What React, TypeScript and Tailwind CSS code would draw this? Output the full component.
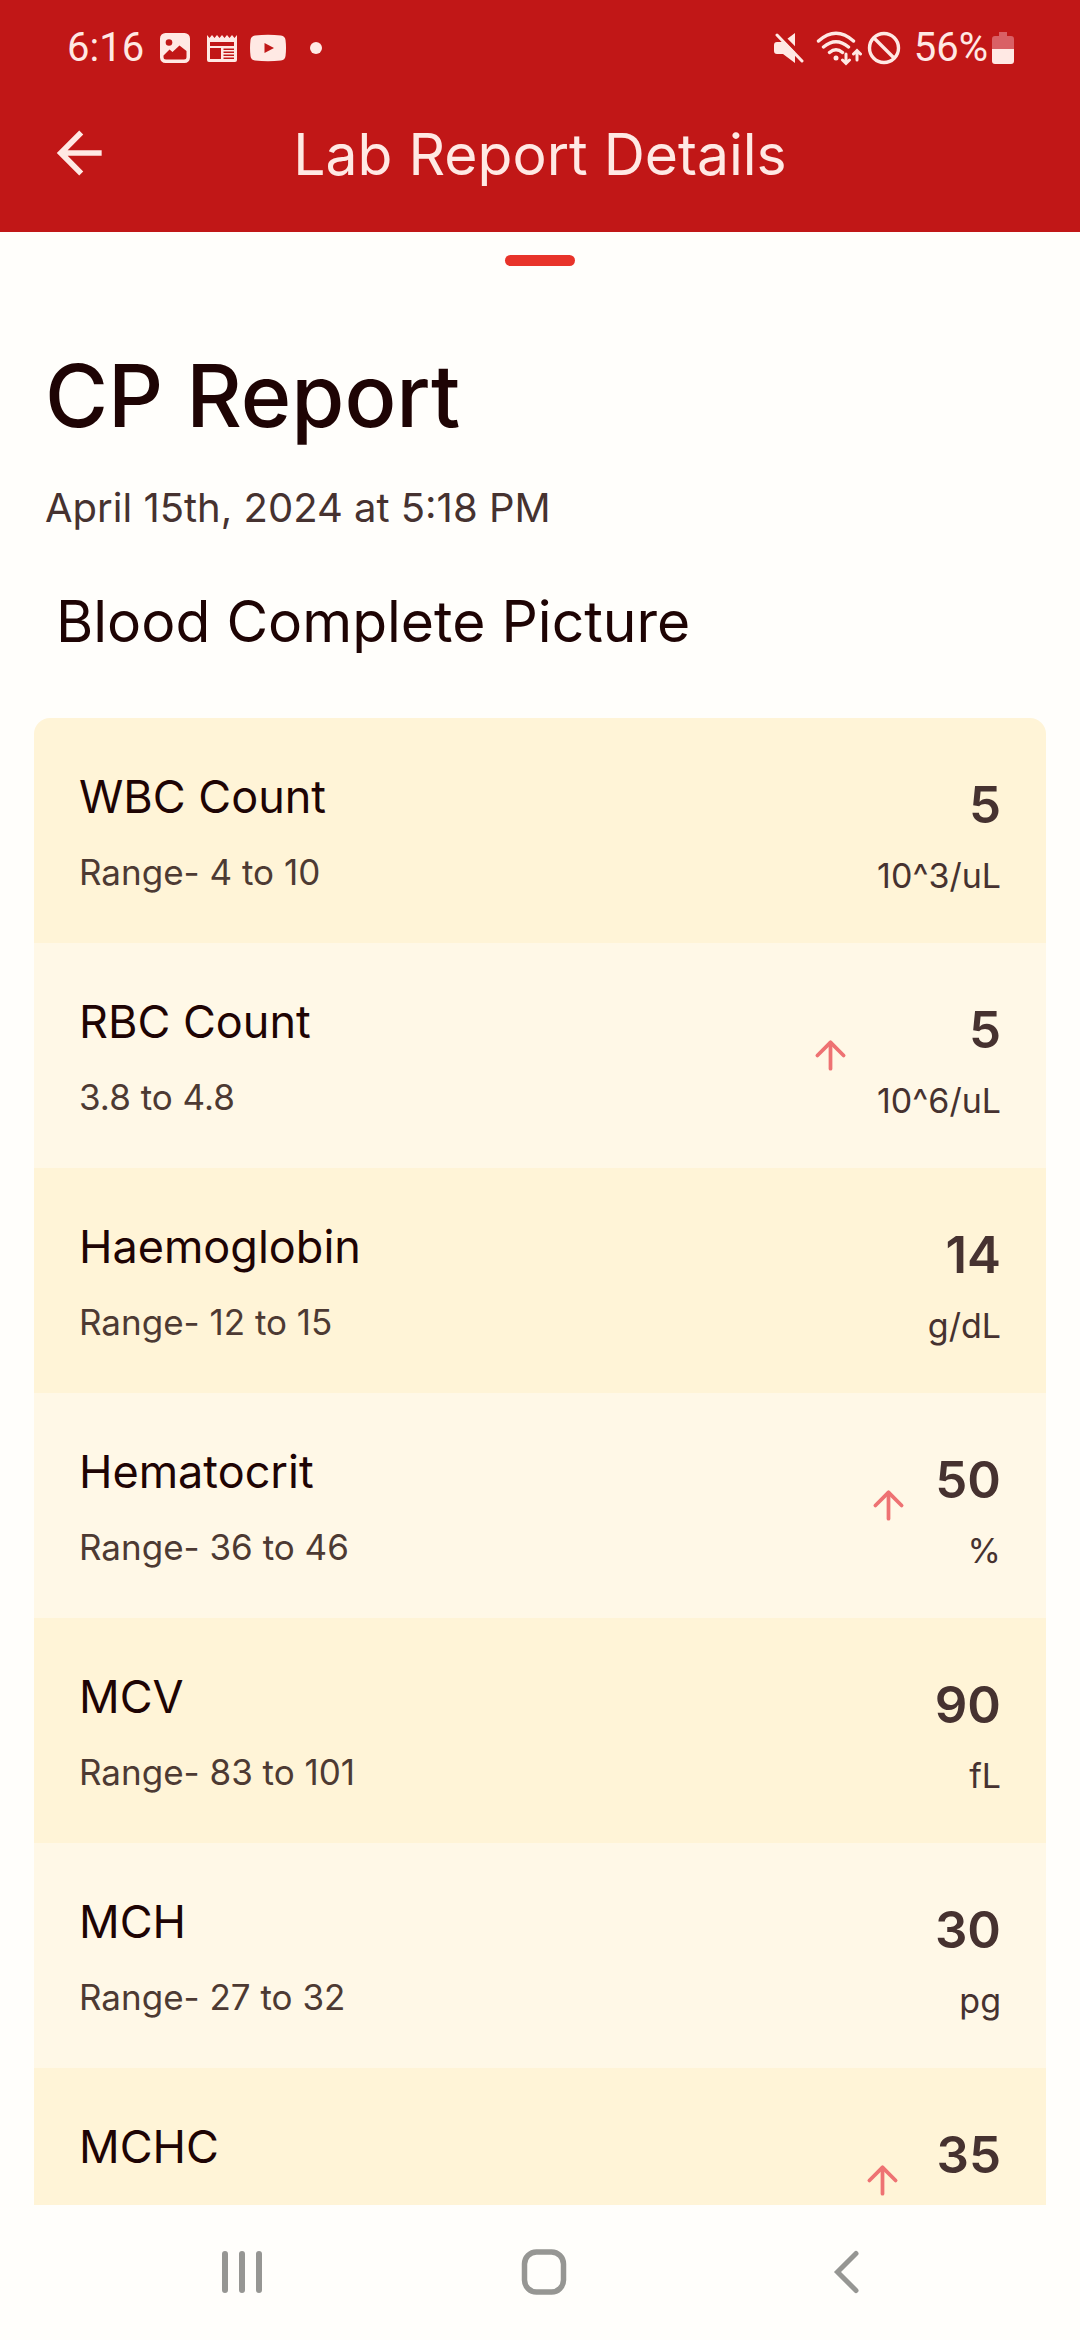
import React from 'react';
import { ArrowUp } from 'lucide-react';
import clsx from 'clsx';

interface LabResult {
  name: string;
  range?: string;
  value: number;
  unit?: string;
  high?: boolean;
}

const results: LabResult[] = [
  { name: 'WBC Count', range: 'Range- 4 to 10', value: 5, unit: '10^3/uL' },
  { name: 'RBC Count', range: '3.8 to 4.8', value: 5, unit: '10^6/uL', high: true },
  { name: 'Haemoglobin', range: 'Range- 12 to 15', value: 14, unit: 'g/dL' },
  { name: 'Hematocrit', range: 'Range- 36 to 46', value: 50, unit: '%', high: true },
  { name: 'MCV', range: 'Range- 83 to 101', value: 90, unit: 'fL' },
  { name: 'MCH', range: 'Range- 27 to 32', value: 30, unit: 'pg' },
  { name: 'MCHC', value: 35, high: true },
];

const StatusBar: React.FC = () => (
  <div className="flex h-24 items-center justify-between pl-[67px] pr-[66px] font-[Roboto,sans-serif] text-[40px] leading-none">
    <div className="flex items-center">
      <span>6:16</span>
      <svg className="ml-4 h-[30px] w-[30px]" viewBox="0 0 30 30" fill="none">
        <rect x="1.5" y="1.5" width="27" height="27" rx="4" fill="currentColor" stroke="currentColor" strokeWidth="3" />
        <circle cx="9" cy="9.5" r="3.3" fill="#c11717" />
        <path d="M3.5 22.5 9.5 16.5 12.5 19 19.5 12.5 26.5 18V24Q26.5 26.5 24 26.5H6Q3.5 26.5 3.5 24Z" fill="#c11717" />
      </svg>
      <svg className="ml-4 h-[30px] w-8" viewBox="0 0 32 30" fill="none">
        <path d="M1 2 3.5 5 6 2 8.5 5 11 2 13.5 5 16 2 18.5 5 21 2 23.5 5 26 2 28.5 5 31 2V27Q31 29 29 29H3Q1 29 1 27Z" fill="currentColor" />
        <path d="M4 9H28V13H4ZM4 15H15V26H4ZM17.5 15.5H28V17H17.5ZM17.5 18.5H28V20H17.5ZM17.5 21.5H28V23H17.5ZM17.5 24.5H28V26H17.5Z" fill="#c11717" />
      </svg>
      <svg className="ml-3 h-[30px] w-9" viewBox="0 0 36 30">
        <path d="M5 2.5Q18 1 31 2.5 35 3 35.5 7 36.5 15 35.5 23 35 27 31 27.5 18 28.8 5 27.5 1 27 .5 23-.5 15 .5 7 1 3 5 2.5Z" fill="currentColor" />
        <path d="M14.5 10V20L24 15Z" fill="#c11717" />
      </svg>
      <span className="ml-6 h-3 w-3 rounded-full bg-current" />
    </div>
    <div className="flex items-center">
      <svg className="h-8 w-[30px]" viewBox="0 0 30 32" fill="none">
        <path d="M3 10H9L21 1V31L9 22H3Q0 22 0 19V13Q0 10 3 10Z" fill="currentColor" />
        <path d="M4 0 30 26" stroke="#c11717" strokeWidth="4" />
        <path d="M3 3 28 29" stroke="currentColor" strokeWidth="3" strokeLinecap="round" />
      </svg>
      <svg className="ml-3 h-9 w-[46px]" viewBox="0 0 46 36" fill="none" stroke="currentColor" strokeWidth="3.4" strokeLinecap="round">
        <path d="M2.5 11Q20-4.5 37.5 11M7.5 17Q20 6.5 32.5 17M13.5 22.5Q20 17 26.5 22.5" />
        <circle cx="20" cy="28" r="2.5" fill="currentColor" stroke="none" />
        <path d="M30 24V33M26.5 30 30 33.5 33.5 30M41 30V21M37.5 24 41 20.5 44.5 24" strokeWidth="3" />
      </svg>
      <svg className="ml-1 h-9 w-9" viewBox="0 0 36 36" fill="none" stroke="currentColor" strokeWidth="3.4">
        <circle cx="18" cy="18" r="14.5" />
        <path d="M8 8 28 28" />
      </svg>
      <span className="ml-3">56%</span>
      <svg className="ml-1 h-8 w-[22px]" viewBox="0 0 22 32">
        <path d="M7 0H15V4H19Q22 4 22 7V17H0V7Q0 4 3 4H7Z" fill="#d96065" />
        <path d="M0 17H22V29Q22 32 19 32H3Q0 32 0 29Z" fill="currentColor" />
      </svg>
    </div>
  </div>
);

const ResultRow: React.FC<{ result: LabResult }> = ({ result }) => (
  <li className="flex items-center justify-between px-[45px] py-12 odd:bg-[#fff4d7] even:bg-[#fff8e7]">
    <div>
      <h3 className="text-[45px] leading-[62px] text-[#1e0404]">{result.name}</h3>
      <p className="mt-[22px] h-[45px] text-[35px] leading-[45px] text-[#4d3a33]">{result.range}</p>
    </div>
    <div className="flex items-center gap-6">
      {result.high && <ArrowUp size={45} className="text-[#ee7273]" aria-label="High" />}
      <div className={clsx('text-right text-[#463230]', !result.unit && 'min-w-[72px]')}>
        <p className="text-[51px] font-semibold leading-[74px]">{result.value}</p>
        <p className="mt-4 h-9 text-[34px] leading-9">{result.unit}</p>
      </div>
    </div>
  </li>
);

const NavBar: React.FC = () => (
  <nav className="grid h-[135px] shrink-0 grid-cols-3 items-center justify-items-center pl-[91px] pr-[83px] text-[#969693]">
    <button type="button" aria-label="Recent apps">
      <svg width="48" height="48" viewBox="0 0 48 48" stroke="currentColor" strokeWidth="6" strokeLinecap="round">
        <path d="M7 5V41M24 5V41M41 5V41" />
      </svg>
    </button>
    <button type="button" aria-label="Home">
      <svg width="48" height="48" viewBox="0 0 48 48" fill="none" stroke="currentColor" strokeWidth="5.5">
        <rect x="4.5" y="3" width="39" height="40" rx="12" />
      </svg>
    </button>
    <button type="button" aria-label="Back">
      <svg width="48" height="48" viewBox="0 0 48 48" fill="none" stroke="currentColor" strokeWidth="5" strokeLinecap="round">
        <path d="M34 4.5 15.5 23 34 41.5" />
      </svg>
    </button>
  </nav>
);

const App: React.FC = () => {
  return (
    <div className="flex h-screen flex-col bg-[#fffefb] font-[Inter,sans-serif]">
      <header className="shrink-0 bg-[#c11717] text-[#ffe9e4]">
        <StatusBar />
        <div className="grid h-[136px] grid-cols-[68px_1fr_68px] items-start px-[45px] pt-[23px]">
          <button type="button" aria-label="Go back">
            <svg width="68" height="68" viewBox="0 0 24 24" fill="currentColor">
              <path d="M20 11V13H8L13.5 18.5 12.08 19.92 4.16 12 12.08 4.08 13.5 5.5 8 11Z" />
            </svg>
          </button>
          <h1 className="text-center text-[57px] leading-[72px]">Lab Report Details</h1>
        </div>
      </header>

      <main className="min-h-0 flex-1 overflow-y-auto [scrollbar-width:none]">
        <div className="mx-auto mt-[23px] h-[11px] w-[70px] rounded-full bg-[#e8332a]" />
        <div className="px-[45px] pt-20 text-[#1e0404]">
          <h2 className="text-[86px] font-medium leading-[100px]">CP Report</h2>
          <p className="mt-8 text-[40px] leading-[60px] text-[#463230]">April 15th, 2024 at 5:18 PM</p>
          <h2 className="mt-12 pl-[11px] text-[57px] leading-[72px]">Blood Complete Picture</h2>
        </div>
        <ul className="mx-[34px] mt-[60px] overflow-hidden rounded-2xl">
          {results.map(result => (
            <ResultRow key={result.name} result={result} />
          ))}
        </ul>
      </main>

      <NavBar />
    </div>
  );
};

export default App;
